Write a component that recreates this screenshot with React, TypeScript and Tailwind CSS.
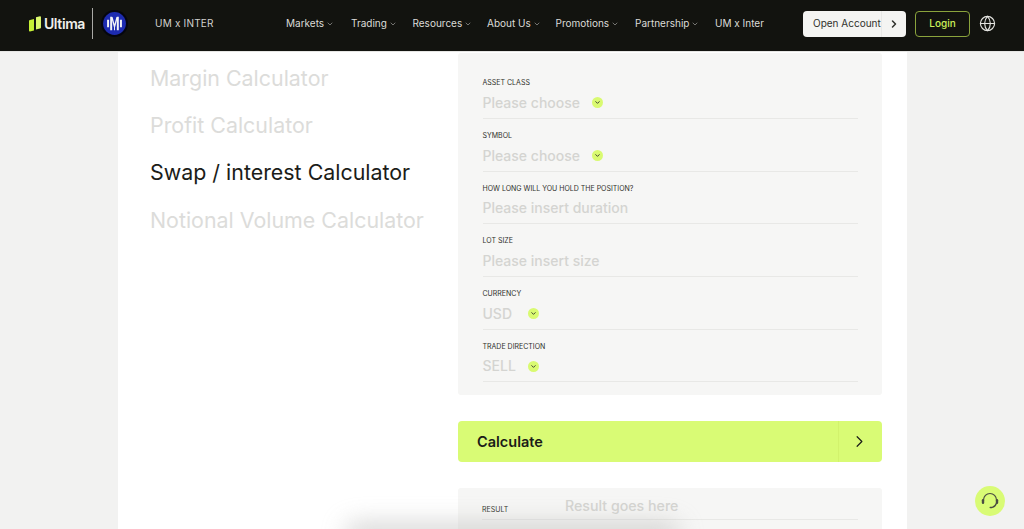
import { ChevronDown, ChevronRight, Globe } from "lucide-react";

const navItems = [
  { id: 1, text: "Markets", w: "w-[65px]" },
  { id: 2, text: "Trading", w: "w-[61.5px]" },
  { id: 3, text: "Resources", w: "w-[74.5px]" },
  { id: 4, text: "About Us", w: "w-[68.5px]" },
  { id: 5, text: "Promotions", w: "w-[79.5px]" },
  { id: 6, text: "Partnership", w: "w-[80px]" },
];

const fields = [
  { label: "ASSET CLASS", value: "Please choose", select: true, w: "w-[98.5px]" },
  { label: "SYMBOL", value: "Please choose", select: true, w: "w-[98.5px]" },
  { label: "HOW LONG WILL YOU HOLD THE POSITION?", value: "Please insert duration", select: false, w: "" },
  { label: "LOT SIZE", value: "Please insert size", select: false, w: "" },
  { label: "CURRENCY", value: "USD", select: true, w: "w-[34px]" },
  { label: "TRADE DIRECTION", value: "SELL", select: true, w: "w-[34px]" },
];

const calculators = [
  { text: "Margin Calculator", active: false },
  { text: "Profit Calculator", active: false },
  { text: "Swap / interest Calculator", active: true },
  { text: "Notional Volume Calculator", active: false },
];

const InterLogo = () => (
  <svg width="27" height="27" viewBox="0 0 26 26">
    <circle cx="13" cy="13" r="13" fill="#05060f" />
    <circle cx="13" cy="13" r="11" fill="#1d2bb0" />
    <path d="M6.8 9.5v7M9.8 6.5v13M16.2 6.5v13M19.2 9.5v7" stroke="#f2f2f6" strokeWidth="1.9" />
    <path d="M10.5 7l2.5 9 2.5-9" stroke="#f2f2f6" strokeWidth="1.3" fill="none" />
    <path d="M13 15v4.5" stroke="#f2f2f6" strokeWidth="1" />
  </svg>
);

const Headset = () => (
  <svg width="22" height="22" viewBox="0 0 22 22" fill="none">
    <path d="M4.5 10a6.5 6.5 0 0 1 13 0" stroke="#4a4c42" strokeWidth="1.2" />
    <path d="M17.5 13a6.5 6.5 0 0 1-4.5 4.5" stroke="#4a4c42" strokeWidth="1.2" />
    <rect x="2.8" y="9" width="2.4" height="5" rx="1.2" fill="#4a4c42" />
    <rect x="16.8" y="9" width="2.4" height="5" rx="1.2" fill="#4a4c42" />
    <rect x="10.5" y="16.7" width="3" height="1.5" rx="0.7" fill="#4a4c42" />
  </svg>
);

const App = () => {
  return (
    <div className="relative h-[529px] overflow-hidden bg-[#f2f2f1] font-['Inter',sans-serif]">
      {/* Navbar */}
      <nav className="flex h-[52px] items-center border-b border-[#e6e6e4] bg-[#12130f] pb-[4px] pl-[29px]">
        <div className="flex w-[56px] items-center gap-[3px]">
          <svg width="12" height="16" viewBox="0 0 12 16">
            <path d="M1 4L5 3V14.5L1 15.5C0.4 15.6 0 15.2 0 14.7V5C0 4.5 0.4 4.1 1 4Z" fill="#c6f135" />
            <path d="M7 1.2L11 0.3C11.6 0.2 12 0.6 12 1.1V11.5C12 12 11.6 12.4 11 12.5L7 13.4Z" fill="#dcfa6e" />
          </svg>
          <span className="text-[14px] font-semibold leading-none tracking-[-0.4px] text-[#f0f0ec]">
            Ultima
          </span>
        </div>
        <div className="ml-[7px] h-[31px] w-px bg-[#a9a9a5]" />
        <div className="ml-[7.5px]">
          <InterLogo />
        </div>
        <span className="ml-[27.5px] w-[131px] text-[10px] tracking-[0.2px] text-[#d2d2ce]">UM x INTER</span>
        <ul className="flex items-center">
          {navItems.map((item) => (
            <li key={item.id} className={`flex items-center gap-[2px] text-[10px] text-[#dcdcd8] ${item.w}`}>
              {item.text}
              <ChevronDown className="h-[8px] w-[8px] text-[#a5a5a1]" strokeWidth={2} />
            </li>
          ))}
          <li className="w-[88px] text-[10px] text-[#dcdcd8]">UM x Inter</li>
        </ul>
        <div className="flex h-[26px] w-[103px] items-center rounded-[4px] bg-[#f4f4f2] text-[#30312c]">
          <span className="w-[78px] pl-[10px] text-[10px] whitespace-nowrap">Open Account</span>
          <div className="flex h-full flex-1 items-center justify-center border-l border-[#e8e8e6]">
            <ChevronRight className="h-[12px] w-[12px]" strokeWidth={3} />
          </div>
        </div>
        <button className="ml-[9px] h-[26px] w-[55px] rounded-[4px] border border-[#8aa33c] text-[10px] font-medium text-[#cdf05a]">
          Login
        </button>
        <Globe className="ml-[9px] h-[17px] w-[17px] text-[#e4e4e0]" strokeWidth={1.6} />
      </nav>

      {/* Page body */}
      <div className="ml-[118px] flex h-[477px] w-[789px] bg-white pl-[32px]">
        <ul className="w-[308px] pt-[14px]">
          {calculators.map((item) => (
            <li
              key={item.text}
              className={`mb-[15.2px] h-[32px] text-[21.4px] leading-[24px] whitespace-nowrap ${
                item.active ? "text-[#1b1c18]" : "text-[#dcdcda]"
              }`}
            >
              {item.text}
            </li>
          ))}
        </ul>

        <div className="w-[424px] pt-[1px]">
          <div className="h-[342px] rounded-[3px] bg-[#f6f6f5] pl-[24.5px] pr-[24px] pt-[24.3px]">
            {fields.map((field) => (
              <div key={field.label} className="mb-[11px] h-[41.7px] border-b border-[#e8e8e6]">
                <div className="text-[7px] leading-[12px] text-[#2f302b]">{field.label}</div>
                <div className="mt-[4.6px] flex items-center text-[14px] font-medium leading-[18px] text-[#d4d4d1]">
                  <span className={`whitespace-nowrap ${field.w}`}>{field.value}</span>
                  {field.select && (
                    <span className="ml-[11px] flex h-[11px] w-[11px] items-center justify-center rounded-full bg-[#d9fa71]">
                      <ChevronDown className="h-[7px] w-[7px] text-[#30312c]" strokeWidth={3} />
                    </span>
                  )}
                </div>
              </div>
            ))}
          </div>

          <button className="mt-[26px] flex h-[41px] w-full items-center rounded-[4px] bg-[#d9fb75] text-[#1b1c18]">
            <span className="flex-1 pl-[19px] text-left text-[14.5px] font-semibold">Calculate</span>
            <span className="flex h-full w-[44px] items-center justify-center border-l border-[#d2f26c] pr-[2px]">
              <ChevronRight className="h-[19px] w-[19px]" strokeWidth={1.5} />
            </span>
          </button>

          <div className="mt-[26px] h-[60px] rounded-[3px] bg-[#f6f6f5] pl-[24px] pr-[24px] pt-[8px]">
            <div className="flex h-[24px] items-center border-b border-[#e8e8e6]">
              <span className="w-[83px] pt-[6px] text-[7px] text-[#2f302b]">RESULT</span>
              <span className="pb-[4px] text-[14.2px] font-medium text-[#d4d4d1]">Result goes here</span>
            </div>
          </div>
        </div>
      </div>

      {/* Shadow at the bottom edge */}
      <div className="absolute bottom-[-16px] left-[345px] h-[22px] w-[335px] rounded-full bg-[#b8b8b6] opacity-60 blur-[12px]" />

      {/* Support button */}
      <button className="absolute left-[975px] top-[486px] flex h-[30px] w-[30px] items-center justify-center rounded-full bg-[#d9fb75]">
        <Headset />
      </button>
    </div>
  );
};

export default App;
